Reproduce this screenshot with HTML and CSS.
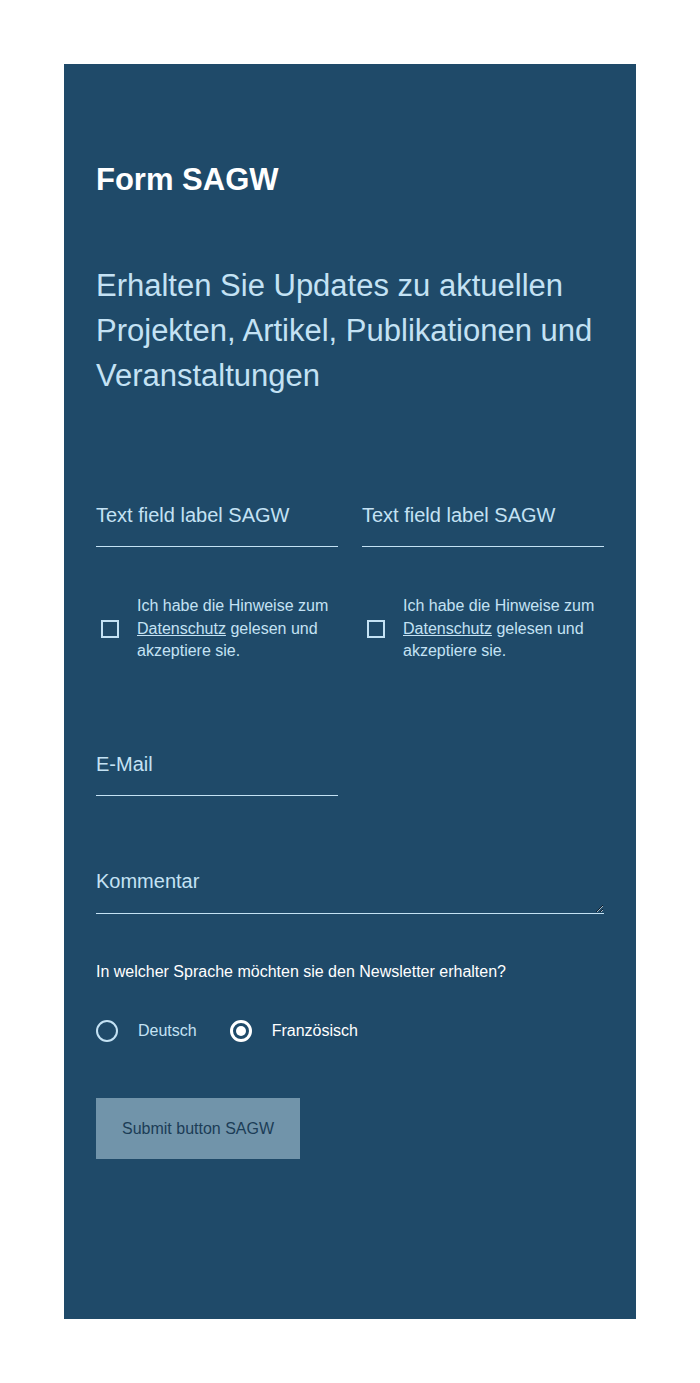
FILE: index.html
```html
<!DOCTYPE html>
<html lang="de">
<head>
<meta charset="utf-8">
<title>Form SAGW</title>
<link rel="stylesheet" href="styles.css">
</head>
<body>
<main class="panel">
  <h1 class="title">Form SAGW</h1>
  <p class="lead">Erhalten Sie Updates zu aktuellen Projekten, Artikel, Publikationen und Veranstaltungen</p>
  <form class="form">
    <div class="grid grid-fields">
      <label class="field">
        <span class="field-label">Text field label SAGW</span>
        <input class="field-input" type="text">
      </label>
      <label class="field">
        <span class="field-label">Text field label SAGW</span>
        <input class="field-input" type="text">
      </label>
    </div>
    <div class="grid grid-checks">
      <label class="check">
        <span class="check-box"></span>
        <span class="check-text">Ich habe die Hinweise zum <a class="link" href="#">Datenschutz</a> gelesen und akzeptiere sie.</span>
      </label>
      <label class="check">
        <span class="check-box"></span>
        <span class="check-text">Ich habe die Hinweise zum <a class="link" href="#">Datenschutz</a> gelesen und akzeptiere sie.</span>
      </label>
    </div>
    <div class="grid grid-email">
      <label class="field">
        <span class="field-label">E-Mail</span>
        <input class="field-input" type="email">
      </label>
    </div>
    <label class="field field-comment">
      <span class="field-label">Kommentar</span>
      <textarea class="field-area"></textarea>
    </label>
    <p class="question">In welcher Sprache möchten sie den Newsletter erhalten?</p>
    <div class="radios">
      <label class="radio">
        <span class="radio-dot"></span>
        <span class="radio-text">Deutsch</span>
      </label>
      <label class="radio radio-on">
        <span class="radio-dot"></span>
        <span class="radio-text">Französisch</span>
      </label>
    </div>
    <button class="submit" type="button">Submit button SAGW</button>
  </form>
</main>
</body>
</html>
```

FILE: styles.css
```css
* { box-sizing: border-box; }

body {
  margin: 0;
  background: #ffffff;
  font-family: "Liberation Sans", Arial, sans-serif;
}

.panel {
  margin: 64px;
  background: #1f4a69;
  padding: 97px 32px 160px;
}

.title {
  margin: 0;
  font-size: 31px;
  line-height: 37px;
  font-weight: 700;
  color: #ffffff;
}

.lead {
  margin: 65px 0 0;
  font-size: 31px;
  line-height: 45px;
  font-weight: 400;
  color: #c4e2f4;
}

.form {
  display: flex;
  flex-direction: column;
}

.grid {
  display: grid;
  grid-template-columns: 1fr 1fr;
  column-gap: 24px;
}

.grid-fields { margin-top: 105px; }
.grid-checks { margin-top: 48px; }
.grid-email { margin-top: 89px; }

.field {
  display: flex;
  flex-direction: column;
}

.field-label {
  font-size: 20px;
  line-height: 24px;
  color: #c4e2f4;
}

.field-input {
  display: block;
  width: 100%;
  height: 20px;
  margin: 0;
  padding: 0;
  border: 0;
  border-bottom: 1px solid #c4e2f4;
  background: transparent;
  outline: none;
}

.field-comment { margin-top: 73px; }

.field-area {
  display: block;
  width: 100%;
  height: 21px;
  min-height: 21px;
  margin: 0;
  padding: 0;
  border: 0;
  border-bottom: 1px solid #c4e2f4;
  background: transparent;
  outline: none;
  resize: vertical;
  color: #c4e2f4;
}

.check {
  display: flex;
  align-items: center;
  gap: 18px;
}

.check-box {
  flex: none;
  width: 18px;
  height: 18px;
  margin-left: 5px;
  border: 2px solid #c4e2f4;
}

.check-text {
  font-size: 16px;
  line-height: 22.5px;
  color: #c4e2f4;
}

.link {
  color: #c4e2f4;
  text-decoration: underline;
}

.question {
  margin: 47px 0 0;
  font-size: 16px;
  line-height: 22.4px;
  color: #ffffff;
}

.radios {
  display: flex;
  align-items: center;
  gap: 33px;
  margin-top: 37px;
}

.radio {
  display: flex;
  align-items: center;
  gap: 20px;
}

.radio-dot {
  flex: none;
  width: 22px;
  height: 22px;
  border-radius: 50%;
  border: 2px solid #c4e2f4;
  display: flex;
  align-items: center;
  justify-content: center;
}

.radio-on .radio-dot {
  border: 3px solid #ffffff;
}

.radio-on .radio-dot::after {
  content: "";
  width: 10px;
  height: 10px;
  border-radius: 50%;
  background: #ffffff;
}

.radio-text {
  font-size: 16px;
  line-height: 22px;
  color: #c4e2f4;
}

.radio-on .radio-text { color: #ffffff; }

.submit {
  align-self: flex-start;
  margin-top: 56px;
  height: 61px;
  padding: 0 26px;
  border: 0;
  background: #7194aa;
  color: #1c3d57;
  font-family: "Liberation Sans", Arial, sans-serif;
  font-size: 16px;
  line-height: 21px;
}
```
